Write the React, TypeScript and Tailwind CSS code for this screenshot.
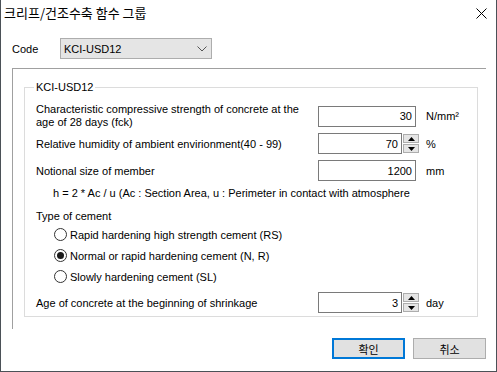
import React from "react";

function Spinner() {
  return (
    <div className="flex flex-col w-[17px] h-[21px] pl-[1px] py-[1px] gap-[1px]">
      <div className="flex-1 flex items-center justify-center bg-[#e5e5e5] border border-[#adadad]">
        <svg width="7" height="4" viewBox="0 0 7 4"><path d="M3.5 0 L7 4 L0 4 Z" fill="#000" /></svg>
      </div>
      <div className="flex-1 flex items-center justify-center bg-[#e5e5e5] border border-[#adadad]">
        <svg width="7" height="4" viewBox="0 0 7 4"><path d="M0 0 L7 0 L3.5 4 Z" fill="#000" /></svg>
      </div>
    </div>
  );
}

function NumBox({ value, spin }: { value: string; spin?: boolean }) {
  if (spin) {
    return (
      <div className="flex w-[101px] h-[21px]">
        <div className="w-[84px] h-[21px] border border-[#7a7a7a] bg-white flex items-center justify-end pr-[3px]">{value}</div>
        <Spinner />
      </div>
    );
  }
  return (
    <div className="w-[98px] h-[21px] border border-[#7a7a7a] bg-white flex items-center justify-end pr-[3px]">{value}</div>
  );
}

function Radio({ checked, label }: { checked?: boolean; label: string }) {
  return (
    <div className="flex items-center h-[21px] pl-[18px]">
      <div className="w-[13px] h-[13px] rounded-full border border-[#333] bg-white flex items-center justify-center">
        {checked && <div className="w-[7px] h-[7px] rounded-full bg-[#1a1a1a]" />}
      </div>
      <span className="ml-[3px]">{label}</span>
    </div>
  );
}

export default function App() {
  return (
    <div className="w-[497px] h-[372px] bg-white border-l border-r border-b border-[#4b5157] flex flex-col text-[11px] text-black font-['Liberation_Sans',sans-serif] leading-[14px]">
      {/* Title bar */}
      <div className="h-[30px] flex items-start pt-[4px] pl-[3px] pr-[9px]">
        <span className="text-[13px] leading-[18px] font-['Noto_Sans_CJK_KR','Liberation_Sans',sans-serif] text-black">크리프/건조수축 함수 그룹</span>
        <div className="ml-auto mt-[4px]">
          <svg width="11" height="11" viewBox="0 0 11 11">
            <path d="M0.5 0.5 L10.5 10.5 M10.5 0.5 L0.5 10.5" stroke="#000" strokeWidth="1" />
          </svg>
        </div>
      </div>

      {/* Code row */}
      <div className="flex items-center mt-[8px] pl-[11px] h-[21px]">
        <span className="w-[48px]">Code</span>
        <div className="w-[152px] h-[21px] bg-[#e5e5e5] border border-[#adadad] flex items-center pl-[3px] pr-[4px]">
          <span>KCI-USD12</span>
          <svg className="ml-auto" width="10" height="6" viewBox="0 0 10 6">
            <path d="M0.5 0.5 L5 5 L9.5 0.5" stroke="#555" strokeWidth="1" fill="none" />
          </svg>
        </div>
      </div>

      {/* Outer frame */}
      <div className="ml-[11px] w-[474px] mt-[9px] border-t border-l border-[#a0a0a0] pt-[18px] pl-[11px] pr-[8px] pb-[12px]">
        {/* Group box */}
        <div className="relative border border-[#dcdcdc] pl-[11px] pb-[3px]">
          <span className="absolute left-[9px] top-[-8px] bg-white px-[2px] leading-[14px]">KCI-USD12</span>

          <div className="flex items-center mt-[14px] h-[28px]">
            <div className="w-[282px] leading-[13.5px]">
              Characteristic compressive strength of concrete at the
              <br />
              age of 28 days (fck)
            </div>
            <NumBox value="30" />
            <span className="ml-[10px]">N/mm²</span>
          </div>

          <div className="flex items-center mt-[3px] h-[21px]">
            <div className="w-[282px]">Relative humidity of ambient envirionment(40 - 99)</div>
            <NumBox value="70" spin />
            <span className="ml-[7px]">%</span>
          </div>

          <div className="flex items-center mt-[6px] h-[21px]">
            <div className="w-[282px]">Notional size of member</div>
            <NumBox value="1200" />
            <span className="ml-[10px]">mm</span>
          </div>

          <div className="mt-[4px] h-[16px] flex items-center pl-[17px]">
            h = 2 * Ac / u (Ac : Section Area, u : Perimeter in contact with atmosphere
          </div>

          <div className="mt-[7px] h-[16px] flex items-center">Type of cement</div>

          <Radio label="Rapid hardening high strength cement (RS)" />
          <Radio checked label="Normal or rapid hardening cement (N, R)" />
          <Radio label="Slowly hardening cement (SL)" />

          <div className="flex items-center mt-[5px] h-[21px]">
            <div className="w-[282px]">Age of concrete at the beginning of shrinkage</div>
            <NumBox value="3" spin />
            <span className="ml-[7px]">day</span>
          </div>
        </div>
      </div>

      {/* Buttons */}
      <div className="flex justify-end gap-[8px] mt-[9px] pr-[10px]">
        <button className="w-[73px] h-[21px] bg-[#e1e1e1] border-2 border-[#0078d7] flex items-center justify-center font-['Noto_Sans_CJK_KR','Liberation_Sans',sans-serif] text-[11px]">확인</button>
        <button className="w-[73px] h-[21px] bg-[#e1e1e1] border border-[#adadad] flex items-center justify-center font-['Noto_Sans_CJK_KR','Liberation_Sans',sans-serif] text-[11px]">취소</button>
      </div>
    </div>
  );
}
